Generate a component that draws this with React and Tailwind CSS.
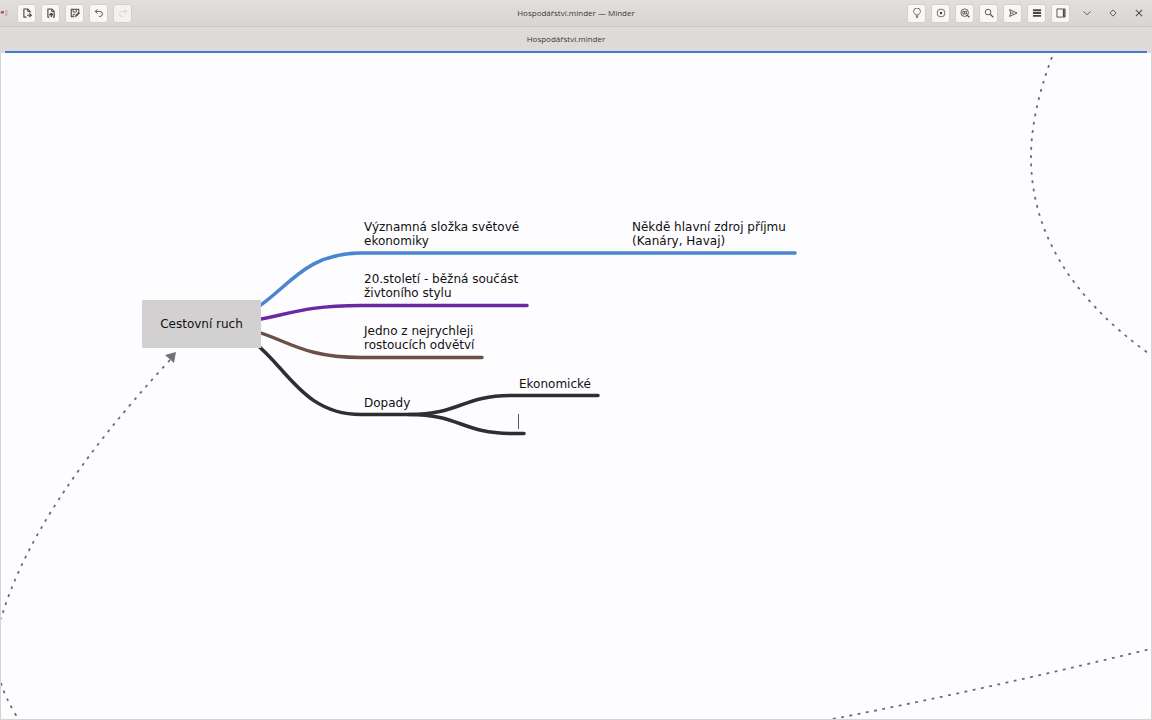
import React, { useState } from 'react';

// Small 16x16 line icon used by every header button
const Icon = ({ children }) => (
  <svg
    viewBox="0 0 16 16"
    className="w-[10px] h-[10px]"
    fill="none"
    stroke="currentColor"
    strokeWidth="1.4"
    strokeLinejoin="round"
    aria-hidden="true"
  >
    {children}
  </svg>
);

const icons = {
  new: (
    <Icon>
      <path d="M7 14.5H3V1.5h6L13 5.500v2" strokeWidth="1.800" />
      <path d="M9 1.500V5.500h4" />
      <path d="M8 11.500h7M11.500 8.500L15 11.500l-3.500 3" strokeWidth="1.800" />
    </Icon>
  ),
  open: (
    <Icon>
      <path d="M5 14.500H3V1.500h6l4 4v9h-2" strokeWidth="1.800" />
      <path d="M9 1.500V5.500h4" />
      <path d="M8.500 14.500V9M5.500 11.500l3-3 3 3" strokeWidth="2" />
    </Icon>
  ),
  save: (
    <Icon>
      <path d="M7 14H2V2h12v4" strokeWidth="1.800" />
      <path d="M5 2v4.500h5V2M5 14v-4h3" />
      <path d="M8.500 14l.5-2.500L14 6.500l1.500 1.500-5 5z" fill="currentColor" strokeWidth="1" />
    </Icon>
  ),
  undo: (
    <Icon>
      <path d="M5.500 2L2 5.500 5.500 9" />
      <path d="M2 5.500h7.500a4 4 0 0 1 0 8H8" />
    </Icon>
  ),
  redo: (
    <Icon>
      <path d="M10.500 2L14 5.500 10.500 9" />
      <path d="M14 5.500H6.500a4 4 0 0 0 0 8H8" />
    </Icon>
  ),
  bulb: (
    <Icon>
      <path d="M5.500 11C5.500 9 2.500 8.500 2.500 5.500a5.500 5.500 0 0 1 11 0c0 3-3 3.500-3 5.500z" strokeWidth="1.200" />
      <path d="M6 13h4M6.500 15h3" />
    </Icon>
  ),
  focus: (
    <Icon>
      <circle cx="8" cy="8" r="6.300" strokeWidth="1.200" />
      <circle cx="8" cy="8" r="2" fill="currentColor" stroke="none" />
    </Icon>
  ),
  zoomFit: (
    <Icon>
      <circle cx="7.500" cy="7.500" r="6" />
      <path d="M11 11l4 4" strokeWidth="2.200" />
      <path d="M4.500 5.500h6v4h-6zM7.500 5.500v4" strokeWidth="1.300" />
    </Icon>
  ),
  search: (
    <Icon>
      <circle cx="6.500" cy="6.500" r="4.500" />
      <path d="M10 10l5 5" strokeWidth="1.800" />
    </Icon>
  ),
  send: (
    <Icon>
      <path d="M2.500 2.500L14.500 8l-12 5.500L4.500 8z" />
      <path d="M4.500 8H9" />
    </Icon>
  ),
  menu: (
    <Icon>
      <path d="M1.500 3.500h13M1.500 8h13M1.500 12.500h13" strokeWidth="3" />
    </Icon>
  ),
  sidebar: (
    <Icon>
      <path d="M1.500 1.500h13v13h-13z" />
      <path d="M12.500 2v12" strokeWidth="3" />
    </Icon>
  ),
  minimize: (
    <Icon>
      <path d="M2.500 5.500L8 11l5.500-5.500" />
    </Icon>
  ),
  maximize: (
    <Icon>
      <path d="M8 3L13 8 8 13 3 8z" />
    </Icon>
  ),
  close: (
    <Icon>
      <path d="M3 3l10 10M13 3L3 13" strokeWidth="1.700" />
    </Icon>
  ),
};

const ToolButton = ({ icon, label, disabled }) => (
  <button
    type="button"
    aria-label={label}
    disabled={disabled}
    className="w-[19px] h-[19px] flex items-center justify-center rounded-[3px] border border-[#d3cfcc] bg-[#f8f7f6] text-[#484848] disabled:bg-[#f3f2f1] disabled:text-[#d2d0ce]"
  >
    {icons[icon]}
  </button>
);

const WindowButton = ({ icon, label }) => (
  <button type="button" aria-label={label} className="w-[26px] h-[19px] flex items-center justify-center text-[#505050]">
    {icons[icon]}
  </button>
);

const fileTools = [
  { icon: 'new', label: 'New' },
  { icon: 'open', label: 'Open' },
  { icon: 'save', label: 'Save as' },
  { icon: 'undo', label: 'Undo' },
  { icon: 'redo', label: 'Redo', disabled: true },
];

const viewTools = [
  { icon: 'bulb', label: 'Brainstorm' },
  { icon: 'focus', label: 'Focus mode' },
  { icon: 'zoomFit', label: 'Zoom' },
  { icon: 'search', label: 'Search' },
  { icon: 'send', label: 'Export' },
  { icon: 'menu', label: 'Menu' },
  { icon: 'sidebar', label: 'Sidebar' },
];

const HeaderBar = () => (
  <header className="h-[27px] shrink-0 grid grid-cols-[1fr_auto_1fr] items-center border-b border-[#cbc7c4] bg-linear-to-b from-[#e1dedc] to-[#d9d5d3]">
    <div className="flex items-center gap-[5px]">
      <svg viewBox="0 0 8 10" className="w-2 h-[10px] mr-1" aria-hidden="true">
        <path d="M0 4.500h3M5 3h2.500M5 5h2.500M5 7h2.500" stroke="#a5a1a0" strokeWidth="1" />
        <rect x="1" y="3" width="3" height="2.500" fill="#c0506a" />
      </svg>
      {fileTools.map((tool) => (
        <ToolButton key={tool.icon} {...tool} />
      ))}
    </div>
    <h1 className="text-[8px] text-[#3a3a3a]">Hospodářství.minder — Minder</h1>
    <div className="flex items-center justify-end">
      <div className="flex items-center gap-[5px] mr-1">
        {viewTools.map((tool) => (
          <ToolButton key={tool.icon} {...tool} />
        ))}
      </div>
      <WindowButton icon="minimize" label="Minimize" />
      <WindowButton icon="maximize" label="Maximize" />
      <WindowButton icon="close" label="Close" />
    </div>
  </header>
);

const TabBar = () => (
  <nav className="h-[26px] shrink-0 flex px-[5px] bg-[#dedad8]">
    <button type="button" className="flex-1 pr-5 border-b-2 border-[#3f7acb] text-[8px] text-[#3a3a3a]">
      Hospodářství.minder
    </button>
  </nav>
);

// Branches run from the centre of the parent node to the start of the child line
const branches = [
  { color: '#4a86cf', d: 'M200 271C280 271 280 200 360 200H794' },
  { color: '#6a29a3', d: 'M200 271C280 271 280 252.500 360 252.500H526' },
  { color: '#6b5048', d: 'M200 271C280 271 280 304.500 360 304.500H481' },
  { color: '#2f2e32', d: 'M200 271C280 271 280 361.500 360 361.500H408C460 361.500 460 342.500 512 342.500H597' },
  { color: '#2f2e32', d: 'M408 361.500C460 361.500 460 380.500 512 380.500H523' },
];

// Dotted connections, most of them leave the visible part of the canvas
const connections = [
  'M169 307Q32 455 0 566',
  'M0 630Q4 644 16 664',
  'M1051 4Q1030 60 1030 104Q1030 215 1147 300',
  'M832 666Q990 635 1149 596',
];

const nodes = [
  { text: ['Významná složka světové', 'ekonomiky'], pos: 'left-[363px] top-[167px]' },
  { text: ['Někdě hlavní zdroj příjmu', '(Kanáry, Havaj)'], pos: 'left-[631px] top-[167px]' },
  { text: ['20.století - běžná součást', 'živtoního stylu'], pos: 'left-[363px] top-[219px]' },
  { text: ['Jedno z nejrychleji', 'rostoucích odvětví'], pos: 'left-[363px] top-[271px]' },
  { text: ['Dopady'], pos: 'left-[363px] top-[343px]' },
  { text: ['Ekonomické'], pos: 'left-[518px] top-[324px]' },
];

const MindMap = () => {
  const [draft, setDraft] = useState('');

  return (
    <main className="relative flex-1 overflow-hidden border-x border-b border-[#d6d3d3] bg-[#fdfcff] font-['DejaVu_Sans',sans-serif] text-[12px] leading-[14px] text-[#111111]">
      <svg className="absolute inset-0 w-full h-full" fill="none" aria-hidden="true">
        {connections.map((d) => (
          <path key={d} d={d} stroke="#6e6b6e" strokeWidth="1.800" strokeDasharray="2.800 5.600" />
        ))}
        <path d="M175 299l-11 3 9 8z" fill="#747274" />
        {branches.map((branch) => (
          <path key={branch.d} d={branch.d} stroke={branch.color} strokeWidth="3.500" strokeLinecap="round" />
        ))}
      </svg>

      <div className="absolute left-[141px] top-[247px] w-[119px] h-12 flex items-center justify-center bg-[#d2d0d1]">
        Cestovní ruch
      </div>
      {nodes.map((node) => (
        <div key={node.text[0]} className={`absolute whitespace-nowrap ${node.pos}`}>
          {node.text.map((line) => (
            <div key={line}>{line}</div>
          ))}
        </div>
      ))}
      <input
        type="text"
        aria-label="New node"
        value={draft}
        onChange={(e) => setDraft(e.target.value)}
        className="absolute left-[517px] top-[361px] w-20 h-[15px] border-l border-[#555555] outline-none"
      />
    </main>
  );
};

const App = () => (
  <div className="min-h-screen flex flex-col bg-[#dedad8] font-['Open_Sans','Noto_Sans',sans-serif]">
    <HeaderBar />
    <TabBar />
    <MindMap />
  </div>
);

export default App;
